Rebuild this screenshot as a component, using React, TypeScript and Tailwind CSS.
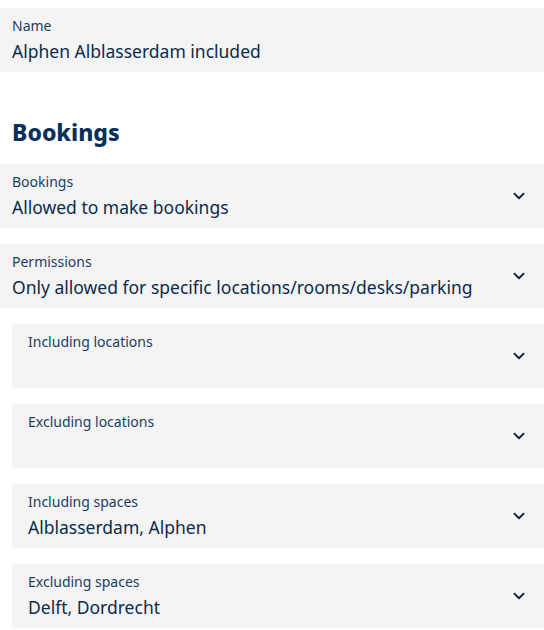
import { ChevronDown } from "lucide-react";

type Field = {
  label: string;
  value?: string;
  nested?: boolean;
  select?: boolean;
};

const fields: Field[] = [
  { label: "Bookings", value: "Allowed to make bookings", select: true },
  { label: "Permissions", value: "Only allowed for specific locations/rooms/desks/parking", select: true },
  { label: "Including locations", nested: true, select: true },
  { label: "Excluding locations", nested: true, select: true },
  { label: "Including spaces", value: "Alblasserdam, Alphen", nested: true, select: true },
  { label: "Excluding spaces", value: "Delft, Dordrecht", nested: true, select: true },
];

function FieldBox({ label, value, nested, select }: Field) {
  return (
    <div className={`${nested ? "ml-3 pl-4" : "pl-3"} relative h-16 bg-[#f4f4f4] pt-[8px] pr-10`}>
      <div className="text-[14px] leading-[20px] text-[#1d3d5f]">{label}</div>
      {value && <div className="mt-[3px] text-[17.5px] leading-[24px] text-[#0b2b4c] whitespace-nowrap">{value}</div>}
      {select && (
        <ChevronDown
          className="absolute right-[16px] top-1/2 -translate-y-1/2 text-[#0b2b4c]"
          size={18}
          strokeWidth={2.6}
        />
      )}
    </div>
  );
}

export default function App() {
  return (
    <div className="w-[544px] bg-white pt-2" style={{ fontFamily: "'Noto Sans', 'Open Sans', sans-serif" }}>
      <FieldBox label="Name" value="Alphen Alblasserdam included" />
      <h2 className="mt-[42px] mb-[14px] pl-3 text-[23px] leading-[36px] font-extrabold text-[#0a2f5c]">Bookings</h2>
      <div className="flex flex-col gap-4">
        {fields.map((f) => (
          <FieldBox key={f.label} {...f} />
        ))}
      </div>
    </div>
  );
}
